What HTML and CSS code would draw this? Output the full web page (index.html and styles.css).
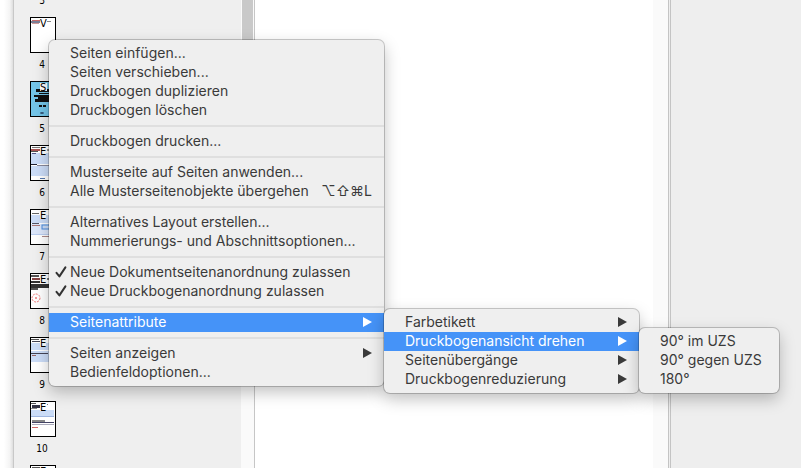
FILE: index.html
```html
<!DOCTYPE html>
<html lang="de">
<head>
    <meta charset="UTF-8">
    <meta name="viewport" content="width=device-width, initial-scale=1.0">
    <title>Seiten</title>
    <link rel="stylesheet" href="styles.css">
</head>
<body>
    <div class="window">
        <div class="edge"></div>
        <aside class="pages">
            <ol class="page-list">
                <li class="page">
                    <svg class="thumb" viewBox="0 0 26 36"><rect width="26" height="36" fill="#000"/><rect x="1" y="1" width="24" height="34" fill="#fff"/></svg>
                    <span class="page-number">3</span>
                </li>
                <li class="page">
                    <svg class="thumb" viewBox="0 0 26 36">
                        <rect width="26" height="36" fill="#000"/><rect x="1" y="1" width="24" height="34" fill="#fff"/>
                        <rect x="2" y="3" width="8" height="1" fill="#c56a6a"/><rect x="1" y="4" width="9" height="2" fill="#7a7f96"/><rect x="2" y="6" width="7" height="1" fill="#c99"/>
                        <rect x="17" y="4" width="4" height="1" fill="#888"/>
                        <text class="master" x="10" y="10">V</text>
                    </svg>
                    <span class="page-number">4</span>
                </li>
                <li class="page">
                    <svg class="thumb" viewBox="0 0 26 36">
                        <rect width="26" height="36" fill="#000"/><rect x="1" y="1" width="24" height="34" fill="#74c5e8"/>
                        <rect x="6" y="8" width="18" height="3" fill="#111"/><rect x="9" y="12" width="14" height="1" fill="#111"/>
                        <rect x="4" y="14" width="15" height="2" fill="#111"/><rect x="8" y="16" width="12" height="2" fill="#111"/><rect x="5" y="18" width="16" height="3" fill="#111"/>
                        <rect x="9" y="24" width="3" height="2" fill="#111"/><rect x="13" y="24" width="3" height="2" fill="#111"/>
                        <ellipse cx="12" cy="32" rx="2" ry="1" fill="#357"/>
                        <rect x="10" y="2" width="7" height="8" fill="#fff"/>
                        <text class="master" x="10" y="10">S</text>
                    </svg>
                    <span class="page-number">5</span>
                </li>
                <li class="page">
                    <svg class="thumb" viewBox="0 0 26 36">
                        <rect width="26" height="36" fill="#000"/><rect x="1" y="1" width="24" height="34" fill="#fff"/>
                        <rect x="1" y="8" width="24" height="11" fill="#cbdcf7"/><rect x="1" y="21" width="24" height="10" fill="#cbdcf7"/>
                        <rect x="2" y="2" width="8" height="1" fill="#777"/><rect x="1" y="4" width="9" height="2" fill="#a55"/><rect x="1" y="6" width="7" height="1" fill="#555"/><rect x="2" y="8" width="4" height="1" fill="#558"/>
                        <rect x="1" y="19" width="6" height="1" fill="#223"/><rect x="7" y="20" width="18" height="1" fill="#889"/>
                        <rect x="10" y="33" width="5" height="1" fill="#57a"/><rect x="17" y="4" width="2" height="2" fill="#999"/>
                        <rect x="10" y="2" width="6" height="8" fill="#fff"/>
                        <text class="master" x="10" y="10">E</text>
                    </svg>
                    <span class="page-number">6</span>
                </li>
                <li class="page">
                    <svg class="thumb" viewBox="0 0 26 36">
                        <rect width="26" height="36" fill="#000"/><rect x="1" y="1" width="24" height="34" fill="#fff"/>
                        <rect x="1" y="6" width="24" height="8" fill="#cbdcf7"/><rect x="1" y="15" width="24" height="10" fill="#dbe6fa"/>
                        <rect x="2" y="4" width="7" height="1" fill="#666"/><rect x="2" y="14" width="7" height="1" fill="#556"/><rect x="2" y="16" width="8" height="1" fill="#a77"/>
                        <rect x="12" y="16" width="12" height="4" fill="#cbdcf7" stroke="#4a8bdc"/>
                        <rect x="1" y="25" width="24" height="1" fill="#b9cdf0"/><rect x="12" y="27" width="9" height="1" fill="#a88"/>
                        <rect x="10" y="2" width="6" height="8" fill="#fff"/>
                        <text class="master" x="10" y="10">E</text>
                    </svg>
                    <span class="page-number">7</span>
                </li>
                <li class="page">
                    <svg class="thumb" viewBox="0 0 26 36">
                        <rect width="26" height="36" fill="#000"/><rect x="1" y="1" width="24" height="34" fill="#fff"/>
                        <rect x="1" y="2" width="8" height="2" fill="#555"/><rect x="2" y="5" width="8" height="2" fill="#844"/><rect x="1" y="8" width="9" height="2" fill="#333"/>
                        <rect x="1" y="11" width="18" height="4" fill="#333"/><rect x="1" y="15" width="7" height="2" fill="#555"/>
                        <circle cx="6" cy="25" r="4" fill="none" stroke="#e77" stroke-dasharray="2 1"/><circle cx="6" cy="25" r="1" fill="#e77"/>
                        <rect x="17" y="5" width="2" height="2" fill="#777"/>
                        <rect x="10" y="2" width="6" height="8" fill="#fff"/>
                        <text class="master" x="10" y="10">E</text>
                    </svg>
                    <span class="page-number">8</span>
                </li>
                <li class="page">
                    <svg class="thumb" viewBox="0 0 26 36">
                        <rect width="26" height="36" fill="#000"/><rect x="1" y="1" width="24" height="34" fill="#fff"/>
                        <rect x="1" y="6" width="24" height="7" fill="#cbdcf7"/><rect x="1" y="14" width="24" height="11" fill="#cbdcf7"/>
                        <rect x="1" y="2" width="8" height="1" fill="#555"/><rect x="2" y="4" width="8" height="1" fill="#445"/>
                        <rect x="1" y="16" width="17" height="1" fill="#445"/><rect x="2" y="18" width="4" height="1" fill="#966"/>
                        <rect x="10" y="2" width="6" height="8" fill="#fff"/>
                        <text class="master" x="10" y="10">E</text>
                    </svg>
                    <span class="page-number">9</span>
                </li>
                <li class="page">
                    <svg class="thumb" viewBox="0 0 26 36">
                        <rect width="26" height="36" fill="#000"/><rect x="1" y="1" width="24" height="34" fill="#fff"/>
                        <rect x="1" y="9" width="23" height="6" fill="#cbdcf7"/><rect x="1" y="15" width="23" height="1" fill="#9fb6e0"/>
                        <rect x="1" y="2" width="5" height="1" fill="#555"/><rect x="2" y="4" width="8" height="3" fill="#334"/><rect x="1" y="7" width="6" height="1" fill="#888"/>
                        <rect x="2" y="19" width="13" height="2" fill="#888"/><rect x="2" y="21" width="22" height="1" fill="#446"/><rect x="2" y="23" width="22" height="1" fill="#aab"/>
                        <rect x="2" y="26" width="6" height="1" fill="#c66"/><rect x="17" y="3" width="1" height="1" fill="#777"/>
                        <rect x="10" y="2" width="6" height="8" fill="#fff"/>
                        <text class="master" x="10" y="10">E</text>
                    </svg>
                    <span class="page-number">10</span>
                </li>
                <li class="page">
                    <svg class="thumb" viewBox="0 0 26 36">
                        <rect width="26" height="36" fill="#000"/><rect x="1" y="1" width="24" height="34" fill="#fff"/>
                        <rect x="2" y="2" width="8" height="2" fill="#555"/>
                        <text class="master" x="10" y="10">E</text>
                    </svg>
                </li>
            </ol>
            <div class="scrollbar"><div class="scroll-thumb"></div></div>
        </aside>
        <main class="canvas"></main>
        <div class="scrollbar canvas-scrollbar"></div>
        <div class="side-panel"></div>
    </div>

    <ul class="menu context-menu" role="menu">
        <li><button class="item" role="menuitem">Seiten einfügen...</button></li>
        <li><button class="item" role="menuitem">Seiten verschieben...</button></li>
        <li><button class="item" role="menuitem">Druckbogen duplizieren</button></li>
        <li><button class="item" role="menuitem">Druckbogen löschen</button></li>
        <li class="separator" role="separator"></li>
        <li><button class="item" role="menuitem">Druckbogen drucken...</button></li>
        <li class="separator" role="separator"></li>
        <li><button class="item" role="menuitem">Musterseite auf Seiten anwenden...</button></li>
        <li><button class="item" role="menuitem">Alle Musterseitenobjekte übergehen <kbd class="shortcut">⌥⇧⌘L</kbd></button></li>
        <li class="separator" role="separator"></li>
        <li><button class="item" role="menuitem">Alternatives Layout erstellen...</button></li>
        <li><button class="item" role="menuitem">Nummerierungs- und Abschnittsoptionen...</button></li>
        <li class="separator" role="separator"></li>
        <li><button class="item checked" role="menuitemcheckbox" aria-checked="true"><svg class="check" viewBox="0 0 12 12"><path d="M1.5 6.8 4.4 10.4 10.4 1.4"/></svg>Neue Dokumentseitenanordnung zulassen</button></li>
        <li><button class="item checked" role="menuitemcheckbox" aria-checked="true"><svg class="check" viewBox="0 0 12 12"><path d="M1.5 6.8 4.4 10.4 10.4 1.4"/></svg>Neue Druckbogenanordnung zulassen</button></li>
        <li class="separator" role="separator"></li>
        <li class="has-submenu">
            <button class="item active" role="menuitem">Seitenattribute <svg class="arrow" viewBox="0 0 9 10"><path d="M0 0 9 5 0 10z"/></svg></button>
            <ul class="menu submenu attributes" role="menu">
                <li><button class="item" role="menuitem">Farbetikett <svg class="arrow" viewBox="0 0 9 10"><path d="M0 0 9 5 0 10z"/></svg></button></li>
                <li class="has-submenu">
                    <button class="item active" role="menuitem">Druckbogenansicht drehen <svg class="arrow" viewBox="0 0 9 10"><path d="M0 0 9 5 0 10z"/></svg></button>
                    <ul class="menu submenu rotation" role="menu">
                        <li><button class="item" role="menuitem">90° im UZS</button></li>
                        <li><button class="item" role="menuitem">90° gegen UZS</button></li>
                        <li><button class="item" role="menuitem">180°</button></li>
                    </ul>
                </li>
                <li><button class="item" role="menuitem">Seitenübergänge <svg class="arrow" viewBox="0 0 9 10"><path d="M0 0 9 5 0 10z"/></svg></button></li>
                <li><button class="item" role="menuitem">Druckbogenreduzierung <svg class="arrow" viewBox="0 0 9 10"><path d="M0 0 9 5 0 10z"/></svg></button></li>
            </ul>
        </li>
        <li class="separator" role="separator"></li>
        <li><button class="item" role="menuitem">Seiten anzeigen <svg class="arrow" viewBox="0 0 9 10"><path d="M0 0 9 5 0 10z"/></svg></button></li>
        <li><button class="item" role="menuitem">Bedienfeldoptionen...</button></li>
    </ul>
</body>
</html>
```
FILE: styles.css
```css
* {
    box-sizing: border-box;
}
body {
    margin: 0;
    font-family: Inter, "Liberation Sans", sans-serif;
    font-size: 14px;
    color: #3a3a3a;
    background-color: white;
    overflow: hidden;
}
ul, ol {
    list-style: none;
    margin: 0;
    padding: 0;
}
.window {
    display: flex;
    height: 100vh;
    overflow: hidden;
}

/* page panel */
.edge {
    flex: 0 0 13px;
    background: linear-gradient(to right, #fff 30%, #f4f4f4 75%, #dedede);
}
.pages {
    flex: 0 0 242px;
    display: flex;
    justify-content: space-between;
    border-left: 1px solid #c8c8c8;
    border-right: 1px solid #c6c6c6;
    background-color: #efefef;
}
.page-list {
    margin-top: -47px;
    padding-left: 16px;
}
.page {
    display: flex;
    flex-direction: column;
    height: 64px;
}
.thumb {
    flex: none;
    width: 26px;
    height: 36px;
    overflow: visible;
}
.master {
    font-family: "DejaVu Sans Condensed", "DejaVu Sans", sans-serif;
    font-size: 11px;
    fill: #000;
}
.page-number {
    width: 24px;
    font-family: "DejaVu Sans Condensed", "DejaVu Sans", sans-serif;
    font-size: 10px;
    line-height: 24px;
    text-align: center;
    color: #000;
}
.scrollbar {
    width: 13px;
    padding: 0 1px;
    background-color: #fafafa;
}
.scroll-thumb {
    height: 120px;
    background-color: #c9c9c9;
}

/* document area */
.canvas {
    flex: 1;
    background-color: white;
}
.canvas-scrollbar {
    width: 15px;
}
.side-panel {
    flex: 0 0 133px;
    border-left: 3px double #c4c4c4;
    background-color: #eee;
}

/* menus */
.menu {
    position: absolute;
    padding: 4px 0;
    background-color: #efefef;
    border-radius: 6px;
    box-shadow: 0 0 0 1px rgba(0, 0, 0, 0.2), 0 6px 16px rgba(0, 0, 0, 0.25);
}
.context-menu {
    top: 40px;
    left: 49px;
    width: 335px;
}
.has-submenu {
    position: relative;
}
.submenu {
    top: -4px;
    left: 100%;
}
.attributes {
    width: 255px;
}
.rotation {
    width: 140px;
}
.item {
    display: flex;
    align-items: center;
    justify-content: space-between;
    width: 100%;
    height: 19px;
    padding: 0 12px 2px 21px;
    border: none;
    background: none;
    font: inherit;
    line-height: 17px;
    color: inherit;
    white-space: nowrap;
}
.item.active {
    background-color: #4593f8;
    color: white;
}
.item.checked {
    justify-content: flex-start;
    gap: 3px;
    padding-left: 6px;
}
.shortcut {
    font-family: Inter, "DejaVu Sans", sans-serif;
    font-size: 14px;
}
.check {
    width: 12px;
    height: 12px;
    fill: none;
    stroke: #333;
    stroke-width: 2;
    stroke-linecap: round;
    stroke-linejoin: round;
}
.arrow {
    width: 9px;
    height: 10px;
    fill: currentColor;
}
.separator {
    height: 2px;
    margin: 5px 0;
    background-color: #dfdfdf;
}
```
